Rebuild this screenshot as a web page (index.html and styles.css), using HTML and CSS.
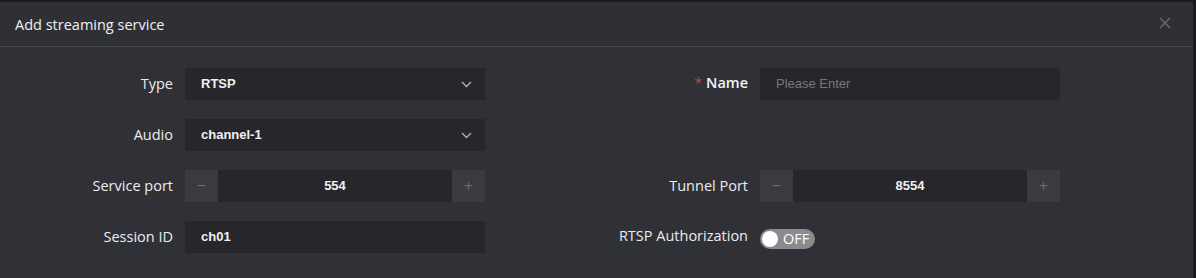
FILE: index.html
```html
<!DOCTYPE html>
<html lang="en">
<head>
    <meta charset="UTF-8">
    <title>Add streaming service</title>
    <link rel="stylesheet" href="styles.css">
</head>
<body>
    <div class="dialog">
        <div class="dialog-header">
            <h1>Add streaming service</h1>
            <span class="close">
                <svg width="12" height="12" viewBox="0 0 12 12"><path d="M1 1L11 11M11 1L1 11" stroke="#6b6c70" stroke-width="1.4"/></svg>
            </span>
        </div>

        <form class="dialog-body">
            <div class="field">
                <label>Type</label>
                <div class="input select">
                    <span class="value">RTSP</span>
                    <svg class="chevron" width="11" height="7" viewBox="0 0 11 7"><path d="M1 1L5.5 5.5L10 1" fill="none" stroke="#b4b4b8" stroke-width="1.3"/></svg>
                </div>
            </div>
            <div class="field">
                <label class="bold"><span class="req">*</span> Name</label>
                <div class="input">
                    <span class="placeholder">Please Enter</span>
                </div>
            </div>

            <div class="field">
                <label>Audio</label>
                <div class="input select">
                    <span class="value">channel-1</span>
                    <svg class="chevron" width="11" height="7" viewBox="0 0 11 7"><path d="M1 1L5.5 5.5L10 1" fill="none" stroke="#b4b4b8" stroke-width="1.3"/></svg>
                </div>
            </div>
            <div class="field"></div>

            <div class="field">
                <label>Service port</label>
                <div class="input number">
                    <span class="step">&minus;</span>
                    <span class="value">554</span>
                    <span class="step">+</span>
                </div>
            </div>
            <div class="field">
                <label>Tunnel Port</label>
                <div class="input number">
                    <span class="step">&minus;</span>
                    <span class="value">8554</span>
                    <span class="step">+</span>
                </div>
            </div>

            <div class="field">
                <label>Session ID</label>
                <div class="input">
                    <span class="value">ch01</span>
                </div>
            </div>
            <div class="field">
                <label class="auth">RTSP Authorization</label>
                <div class="switch">
                    <span class="knob"></span>
                    <span>OFF</span>
                </div>
            </div>
        </form>
    </div>
</body>
</html>
```

FILE: styles.css
```css
body {
    margin: 0;
    background-color: #1b1b1f;
    font-family: "Open Sans", "Liberation Sans", sans-serif;
    color: #e2e2e4;
}

.dialog {
    margin-top: 2px;
    width: 1193px;
    height: 276px;
    background-color: #303136;
}

.dialog-header {
    height: 44px;
    border-bottom: 1px solid #46474c;
    background-color: #2f3035;
    display: flex;
    align-items: center;
    justify-content: space-between;
    padding: 0 22px 0 15px;
}

.dialog-header h1 {
    margin: 0;
    font-size: 14.5px;
    font-weight: normal;
    color: #f0f0f2;
}

.close {
    display: flex;
    margin-top: -3px;
}

.dialog-body {
    margin: 0;
    padding-top: 21px;
    display: grid;
    grid-template-columns: 575px 575px;
    row-gap: 19px;
}

.field {
    display: flex;
    align-items: center;
    height: 32px;
}

.field label {
    width: 173px;
    padding-right: 12px;
    margin-top: -2px;
    text-align: right;
    font-size: 14.5px;
    color: #ececee;
}

.field label.bold {
    font-weight: 600;
    color: #f4f4f6;
    margin-top: -3px;
}

.field label.auth {
    margin-top: -4px;
}

.req {
    color: #b5484a;
    font-weight: normal;
}

.input {
    width: 300px;
    height: 32px;
    box-sizing: border-box;
    background-color: #27272b;
    display: flex;
    align-items: center;
    padding: 0 16px;
    font-family: "Liberation Sans", sans-serif;
    font-size: 13px;
}

.input .value {
    font-weight: bold;
    color: #f0f0f2;
    margin-top: -2px;
}

.select {
    justify-content: space-between;
    padding-right: 13px;
}

.chevron {
    margin-top: 1px;
}

.placeholder {
    color: #77787c;
    font-size: 13px;
    margin-top: -2px;
}

.number {
    padding: 0;
}

.number .value {
    flex: 1;
    text-align: center;
}

.step {
    width: 33px;
    height: 32px;
    display: flex;
    align-items: center;
    justify-content: center;
    background-color: #3a3b40;
    color: #67686c;
    font-size: 16px;
    font-weight: normal;
}

.switch {
    width: 55px;
    height: 20px;
    margin-top: 3px;
    border-radius: 10px;
    background-color: #8b8b8d;
    display: flex;
    align-items: center;
    gap: 5px;
    padding-left: 2px;
    box-sizing: border-box;
    font-size: 14.5px;
    color: #ffffff;
}

.knob {
    width: 16px;
    height: 16px;
    border-radius: 50%;
    background-color: #ffffff;
}
```
